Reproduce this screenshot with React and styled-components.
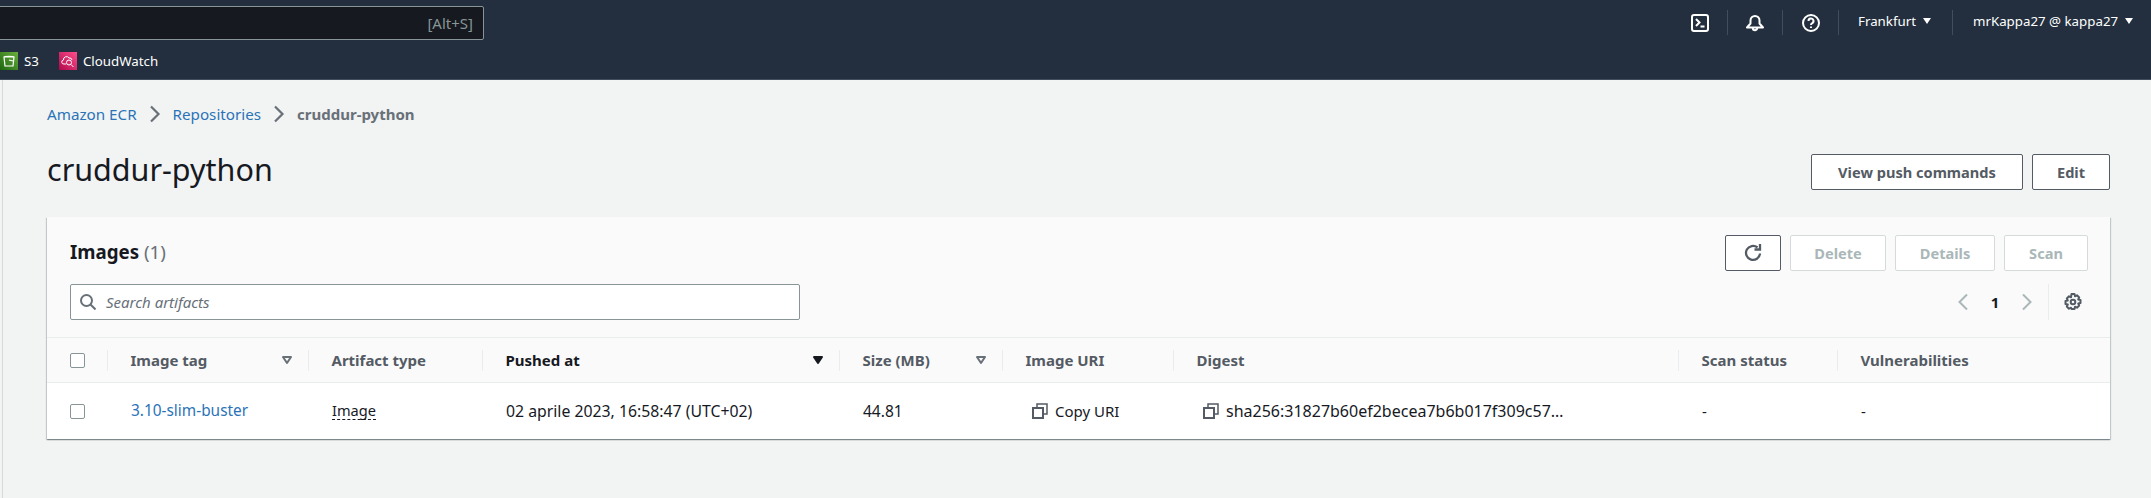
import styled, { createGlobalStyle } from 'styled-components'

const GlobalStyle = createGlobalStyle`
    html, body {
        margin: 0;
        padding: 0;
        background-color: #f2f3f3;
        font-family: "Noto Sans", "Open Sans", sans-serif;
        font-size: 15px;
        color: #16191f;
    }
`

const COLUMNS = '61px 201px 174px 357px 163px 171px 505px 159px 1fr'

const Page = styled.div`
    width: 2151px;
    height: 498px;
    overflow: hidden;
`

const NavBar = styled.header`
    background-color: #232f3e;
    height: 79px;
    border-bottom: 1px solid #414d5c;
    display: flex;
    flex-direction: column;
`

const TopRow = styled.div`
    height: 46px;
    display: flex;
    flex-direction: row;
    justify-content: space-between;
    align-items: flex-start;
`

const SearchShortcut = styled.div`
    box-sizing: border-box;
    width: 486px;
    height: 34px;
    margin: 6px 0 0 -2px;
    padding-right: 10px;
    background-color: #16191f;
    border: 1px solid #879596;
    border-radius: 2px;
    color: #879596;
    font-size: 15px;
    display: flex;
    justify-content: flex-end;
    align-items: center;
`

const Utilities = styled.div`
    display: flex;
    align-items: center;
    height: 25px;
    margin-top: 10px;
    color: #ffffff;
    font-size: 13.3px;
`

const UtilityIcon = styled.div`
    width: ${props => props.$width || '55px'};
    height: 25px;
    border-right: 1px solid #414d5c;
    display: flex;
    justify-content: center;
    align-items: center;
    box-sizing: border-box;
`

const Menu = styled.div`
    width: ${props => props.$width};
    height: 25px;
    padding-left: ${props => props.$pad};
    padding-bottom: 3px;
    border-right: ${props => props.$last ? 'none' : '1px solid #414d5c'};
    display: flex;
    align-items: center;
    gap: 7px;
    line-height: 18px;
    white-space: nowrap;
    box-sizing: border-box;
`

const Caret = styled.span`
    width: 0;
    height: 0;
    border-left: 4px solid transparent;
    border-right: 4px solid transparent;
    border-top: 6px solid #ffffff;
    display: inline-block;
`

const Bookmarks = styled.div`
    display: flex;
    align-items: center;
    height: 33px;
    padding-bottom: 4px;
    box-sizing: border-box;
    color: #ffffff;
    font-size: 13.3px;
`

const Bookmark = styled.div`
    display: flex;
    align-items: center;
    gap: 6px;
    margin-right: 20px;
`

const ServiceIcon = styled.span`
    width: 18px;
    height: 18px;
    display: flex;
    justify-content: center;
    align-items: center;
    background: ${props => props.$bg};
`

const Main = styled.main`
    margin-left: 2px;
    border-left: 1px solid #d5dbdb;
    height: 418px;
    padding: 0 41px 0 44px;
    display: flex;
    flex-direction: column;
`

const Breadcrumbs = styled.nav`
    display: flex;
    align-items: center;
    height: 20px;
    margin-top: 24px;
    font-size: 15.2px;
`

const Crumb = styled.a`
    color: #2a73b8;
`

const CurrentCrumb = styled.span`
    color: #687078;
    font-weight: 700;
    font-size: 15px;
`

const CrumbArrow = styled.svg`
    width: 12px;
    height: 18px;
    margin: 0 12px;
    fill: none;
    stroke: #687078;
    stroke-width: 2.2;
`

const TitleRow = styled.div`
    display: flex;
    justify-content: space-between;
    align-items: center;
    height: 36px;
    margin-top: 30px;
`

const Title = styled.h1`
    margin: 0 0 6px;
    font-size: 30.5px;
    font-weight: 400;
    line-height: 36px;
    color: #16191f;
`

const Actions = styled.div`
    display: flex;
    gap: ${props => props.$gap || '9px'};
`

const Button = styled.button`
    box-sizing: border-box;
    height: 36px;
    width: ${props => props.$width};
    padding: 0;
    background-color: #ffffff;
    border: 1px solid ${props => props.$disabled ? '#d5dbdb' : '#545b64'};
    border-radius: 2px;
    color: ${props => props.$disabled ? '#aab7b8' : '#545b64'};
    font-family: inherit;
    font-size: 14.6px;
    font-weight: 700;
    display: flex;
    justify-content: center;
    align-items: center;
`

const Card = styled.section`
    margin-top: 27px;
    background-color: #ffffff;
    box-shadow: 0 1px 1px 0 rgba(0, 28, 36, 0.3), 1px 1px 1px 0 rgba(0, 28, 36, 0.15), -1px 1px 1px 0 rgba(0, 28, 36, 0.15);
`

const CardHead = styled.div`
    box-sizing: border-box;
    height: 121px;
    padding: 18px 22px 0 23px;
    background-color: #fafafa;
    border-bottom: 1px solid #eaeded;
    display: flex;
    flex-direction: column;
`

const HeadRow = styled.div`
    display: flex;
    justify-content: space-between;
    align-items: center;
    height: 36px;
    margin-top: ${props => props.$top || '0'};
`

const CardTitle = styled.h2`
    margin: 0 0 2px;
    font-size: 18.7px;
    font-weight: 700;
    line-height: 22px;
    color: #16191f;
`

const Count = styled.span`
    color: #687078;
    font-weight: 400;
`

const SearchBox = styled.div`
    box-sizing: border-box;
    width: 730px;
    height: 36px;
    padding-left: 9px;
    background-color: #ffffff;
    border: 1px solid #879596;
    border-radius: 2px;
    display: flex;
    align-items: center;
    gap: 10px;
    color: #687078;
    font-style: italic;
`

const Pagination = styled.div`
    display: flex;
    align-items: center;
    height: 36px;
    margin-right: 6px;
`

const PageNumber = styled.span`
    width: 24px;
    margin: 0 14px;
    text-align: center;
    font-weight: 700;
    color: #16191f;
`

const PrefsDivider = styled.div`
    width: 1px;
    height: 36px;
    margin: 0 15px;
    background-color: #eaeded;
`

const Row = styled.div`
    display: grid;
    grid-template-columns: ${COLUMNS};
    box-sizing: border-box;
`

const HeaderRow = styled(Row)`
    height: 45px;
    background-color: #fafafa;
    border-bottom: 1px solid #eaeded;
`

const BodyRow = styled(Row)`
    height: 56px;
`

const HeaderCell = styled.div`
    box-sizing: border-box;
    padding: ${props => props.$pad || '0 16px 0 22.5px'};
    display: flex;
    align-items: center;
    justify-content: space-between;
    font-size: 15px;
    font-weight: 700;
    color: ${props => props.$sorted ? '#16191f' : '#545b64'};
    position: relative;
    &::after {
        content: '';
        display: ${props => props.$last ? 'none' : 'block'};
        position: absolute;
        right: 0;
        top: 12px;
        bottom: 11px;
        width: 1px;
        background-color: #eaeded;
    }
`

const BodyCell = styled.div`
    box-sizing: border-box;
    padding: ${props => props.$pad || '0 20px 1px 23px'};
    display: flex;
    align-items: center;
    gap: 7px;
    color: #16191f;
    font-size: ${props => props.$size || '15px'};
    white-space: nowrap;
`

const Checkbox = styled.span`
    box-sizing: border-box;
    width: 15px;
    height: 15px;
    margin-left: 23px;
    align-self: center;
    background-color: #ffffff;
    border: 1px solid #879596;
    border-radius: 2px;
`

const CellLink = styled.a`
    color: #2a73b8;
`

const Dashed = styled.span`
    border-bottom: 1px dashed #16191f;
    line-height: 18px;
    font-size: 14.6px;
`

const SortIcon = ({ color, hollow }) => (
    <svg width="12" height="10" viewBox="0 0 12 10">
        <path d="M2 2h8L6 8z" fill={hollow ? 'none' : color} stroke={color} strokeWidth="2" strokeLinejoin="round" />
    </svg>
)

const CopyIcon = () => (
    <svg width="16" height="16" viewBox="0 0 16 16" fill="none" stroke="#545b64" strokeWidth="2">
        <rect x="1" y="5" width="10" height="10" />
        <path d="M5 4V1h10v10h-3" strokeWidth="1.5" />
    </svg>
)

const Chevron = ({ left }) => (
    <svg width="12" height="18" viewBox="0 0 12 18" fill="none" stroke="#aab7b8" strokeWidth="2">
        <path d={left ? 'M10 1.5 2.5 9l7.5 7.5' : 'M2 1.5 9.5 9 2 16.5'} />
    </svg>
)

export default function App() {
    return (
        <Page>
            <GlobalStyle />
            <NavBar>
                <TopRow>
                    <SearchShortcut>[Alt+S]</SearchShortcut>
                    <Utilities>
                        <UtilityIcon>
                            <svg width="18" height="18" viewBox="0 0 18 18" fill="none" stroke="#ffffff" strokeWidth="2">
                                <rect x="1" y="1" width="16" height="16" rx="2" />
                                <path d="M5 5 8.500 8.500 5 12M9.500 12.500h4" />
                            </svg>
                        </UtilityIcon>
                        <UtilityIcon>
                            <svg width="18" height="18" viewBox="0 0 18 18" fill="none" stroke="#ffffff" strokeWidth="2">
                                <path d="M1 13.500h16l-3.500-4V6.500a4.500 4.500 0 0 0-9 0v3z" strokeLinejoin="round" />
                                <path d="M6.800 14a2.200 2.200 0 0 0 4.400 0" />
                            </svg>
                        </UtilityIcon>
                        <UtilityIcon $width="56px">
                            <svg width="18" height="18" viewBox="0 0 18 18" fill="none" stroke="#ffffff" strokeWidth="2">
                                <circle cx="9" cy="9" r="8" />
                                <path d="M6.500 7a2.500 2.500 0 1 1 3.500 2.300c-.7.3-1 .8-1 1.700M9 12.500v1.500" />
                            </svg>
                        </UtilityIcon>
                        <Menu $width="114px" $pad="19px">Frankfurt <Caret /></Menu>
                        <Menu $width="198px" $pad="20px" $last>mrKappa27 @ kappa27 <Caret /></Menu>
                    </Utilities>
                </TopRow>
                <Bookmarks>
                    <Bookmark>
                        <ServiceIcon $bg="linear-gradient(45deg, #1b660f, #6cae3e)">
                            <svg width="14" height="14" viewBox="0 0 14 14" fill="none" stroke="#ffffff" strokeWidth="1.200">
                                <path d="M2 3h10l-1 9H3zM2 3c0-1 10-1 10 0M7 6l4 1" />
                            </svg>
                        </ServiceIcon>
                        S3
                    </Bookmark>
                    <Bookmark>
                        <ServiceIcon $bg="linear-gradient(45deg, #b0084d, #ff4f8b)">
                            <svg width="14" height="14" viewBox="0 0 14 14" fill="none" stroke="#ffffff" strokeWidth="1">
                                <path d="M5 10H3a2 2 0 0 1-.5-4A3 3 0 0 1 8 4a2.500 2.500 0 0 1 3 2" />
                                <circle cx="8" cy="8.500" r="2.500" />
                                <path d="m10 10.500 2.500 2.500" />
                            </svg>
                        </ServiceIcon>
                        CloudWatch
                    </Bookmark>
                </Bookmarks>
            </NavBar>
            <Main>
                <Breadcrumbs>
                    <Crumb>Amazon ECR</Crumb>
                    <CrumbArrow viewBox="0 0 12 18"><path d="M2 1.500 9.500 9 2 16.500" /></CrumbArrow>
                    <Crumb>Repositories</Crumb>
                    <CrumbArrow viewBox="0 0 12 18"><path d="M2 1.500 9.500 9 2 16.500" /></CrumbArrow>
                    <CurrentCrumb>cruddur-python</CurrentCrumb>
                </Breadcrumbs>
                <TitleRow>
                    <Title>cruddur-python</Title>
                    <Actions>
                        <Button $width="212px">View push commands</Button>
                        <Button $width="78px">Edit</Button>
                    </Actions>
                </TitleRow>
                <Card>
                    <CardHead>
                        <HeadRow>
                            <CardTitle>Images <Count>(1)</Count></CardTitle>
                            <Actions>
                                <Button $width="56px">
                                    <svg width="20" height="20" viewBox="0 0 20 20" fill="none" stroke="#545b64" strokeWidth="2.300">
                                        <path d="M17 10.500a7 7 0 1 1-2.500-6" />
                                        <path d="M17 1v5.500h-5.500" />
                                    </svg>
                                </Button>
                                <Button $width="96px" $disabled>Delete</Button>
                                <Button $width="100px" $disabled>Details</Button>
                                <Button $width="84px" $disabled>Scan</Button>
                            </Actions>
                        </HeadRow>
                        <HeadRow $top="13px">
                            <SearchBox>
                                <svg width="16" height="16" viewBox="0 0 16 16" fill="none" stroke="#687078" strokeWidth="2">
                                    <circle cx="6.500" cy="6.500" r="5.500" />
                                    <path d="m10.500 10.500 5 5" />
                                </svg>
                                Search artifacts
                            </SearchBox>
                            <Pagination>
                                <Chevron left />
                                <PageNumber>1</PageNumber>
                                <Chevron />
                                <PrefsDivider />
                                <svg width="18" height="18" viewBox="0 0 18 18" fill="none" stroke="#545b64" strokeWidth="2">
                                    <circle cx="9" cy="9" r="2.300" />
                                    <path d="M7.500 1h3l.5 2.300 2-1 2.200 2.200-1 2 2.300.5v3l-2.300.5 1 2-2.200 2.200-2-1-.5 2.300h-3L7 14.700l-2 1-2.200-2.200 1-2L1.500 11V8l2.300-.5-1-2L5 3.300l2 1z" strokeLinejoin="round" />
                                </svg>
                            </Pagination>
                        </HeadRow>
                    </CardHead>
                    <HeaderRow>
                        <HeaderCell $pad="0"><Checkbox /></HeaderCell>
                        <HeaderCell>Image tag <SortIcon color="#687078" hollow /></HeaderCell>
                        <HeaderCell>Artifact type</HeaderCell>
                        <HeaderCell $sorted>Pushed at <SortIcon color="#16191f" /></HeaderCell>
                        <HeaderCell>Size (MB) <SortIcon color="#687078" hollow /></HeaderCell>
                        <HeaderCell>Image URI</HeaderCell>
                        <HeaderCell>Digest</HeaderCell>
                        <HeaderCell>Scan status</HeaderCell>
                        <HeaderCell $last>Vulnerabilities</HeaderCell>
                    </HeaderRow>
                    <BodyRow>
                        <BodyCell $pad="0"><Checkbox /></BodyCell>
                        <BodyCell $size="15.4px"><CellLink>3.10-slim-buster</CellLink></BodyCell>
                        <BodyCell><Dashed>Image</Dashed></BodyCell>
                        <BodyCell $size="15.8px">02 aprile 2023, 16:58:47 (UTC+02)</BodyCell>
                        <BodyCell $size="15.5px">44.81</BodyCell>
                        <BodyCell $pad="0 0 1px 29px"><CopyIcon />Copy URI</BodyCell>
                        <BodyCell $pad="0 0 1px 29px" $size="16px"><CopyIcon />sha256:31827b60ef2becea7b6b017f309c57…</BodyCell>
                        <BodyCell>-</BodyCell>
                        <BodyCell>-</BodyCell>
                    </BodyRow>
                </Card>
            </Main>
        </Page>
    )
}
